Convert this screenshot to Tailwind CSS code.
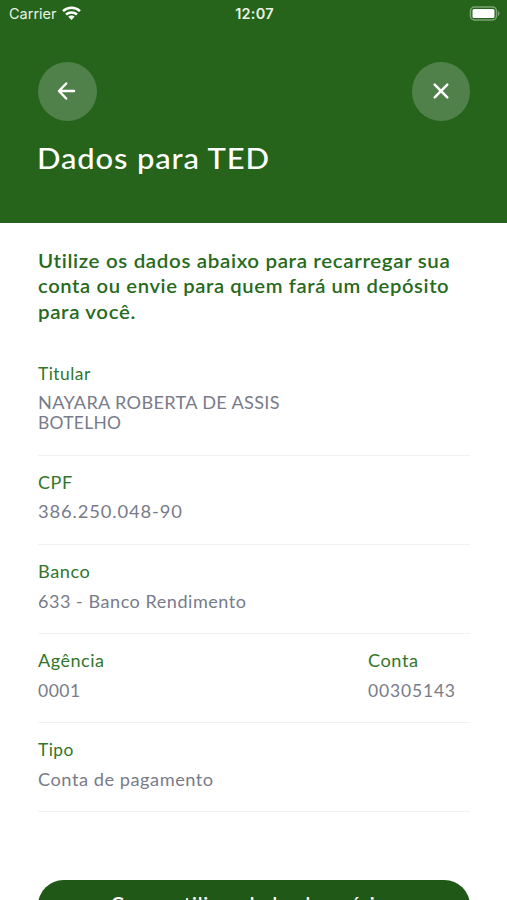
<!DOCTYPE html>
<html lang="pt-BR">
<head>
<meta charset="utf-8">
<meta name="viewport" content="width=device-width, initial-scale=1">
<title>Dados para TED</title>
<script src="https://cdn.jsdelivr.net/npm/@tailwindcss/browser@4"></script>
</head>
<body class="h-[900px] overflow-hidden bg-white font-['Lato',sans-serif]">
<div class="flex h-[900px] w-[507px] flex-col overflow-hidden">
  <header class="h-[223px] shrink-0 bg-[#25641a] text-white">
    <div class="grid h-[28px] grid-cols-3 items-center pl-[9px] pr-[7px] font-['Inter',sans-serif] text-[#e9f3e6]">
      <div class="flex items-center gap-[5px]">
        <span class="text-[14.5px] leading-[28px]">Carrier</span>
        <svg class="mb-[2px] h-[14px] w-[19px]" viewBox="0 0 19 14" fill="none" stroke="#fff" stroke-width="2.5"><path d="M1 5.1C5.8.7 13.2.7 18 5.1M4 8.5c3.1-2.8 7.900-2.800 11 0"/><path d="M9.500 14 6.300 10.800c1.700-1.700 4.700-1.700 6.400 0z" fill="#fff" stroke="none"/></svg>
      </div>
      <span class="text-center text-[14.5px] font-semibold leading-[28px] tracking-[0.200px]">12:07</span>
      <svg class="mb-[2px] h-[15px] w-[31px] justify-self-end" viewBox="0 0 31 15"><rect x="1.500" y="1" width="26" height="13" rx="4" fill="none" stroke="#7da476" stroke-width="1.500"/><rect x="3.500" y="3" width="22" height="9" rx="1.500" fill="#fff"/><path d="M29 5c2 1 2 4 0 5z" fill="#7da476"/></svg>
    </div>
    <div class="mt-[34px] flex justify-between pl-[38px] pr-[37px]">
      <button aria-label="Voltar" class="flex size-[58.500px] items-center justify-center rounded-full bg-[#50814a]">
        <svg class="size-[20px]" viewBox="0 0 20 20" fill="none" stroke="#fff" stroke-width="2.500" stroke-linecap="round" stroke-linejoin="round"><path d="M17 10H2.500M9.200 2.500 2 10l7.200 7.500"/></svg>
      </button>
      <button aria-label="Fechar" class="flex size-[58.500px] items-center justify-center rounded-full bg-[#50814a]">
        <svg class="size-[18px]" viewBox="0 0 18 18" fill="none" stroke="#fff" stroke-width="2.500" stroke-linecap="round"><path d="m2.700 2.700 12.600 12.600m0-12.600-12.600 12.600"/></svg>
      </button>
    </div>
    <h1 class="mt-[17px] pl-[37px] text-[29px] font-medium leading-[40px] tracking-[0.800px]"><span class="inline-block origin-left scale-x-[1.067]">Dados para TED</span></h1>
  </header>
  <main class="px-[37.500px] pt-[24.500px]">
    <p class="flex h-[78px] flex-col items-start whitespace-nowrap text-[19.500px] font-semibold leading-[25.800px] tracking-[0.600px] text-[#276a1d]">
      <span class="origin-left scale-x-[1.054]">Utilize os dados abaixo para recarregar sua</span>
      <span class="origin-left scale-x-[1.036]">conta ou envie para quem fará um depósito</span>
      <span class="origin-left scale-x-[1.050]">para você.</span>
    </p>
    <dl class="mt-[28px] text-[17px] leading-[20px] tracking-[0.500px] text-[#787b89]">
      <div class="h-[102px] border-b border-[#eff0f2] pt-[10px]">
        <dt class="text-[#32752a]"><span class="inline-block origin-left scale-x-[1.020]">Titular</span></dt>
        <dd class="mt-[9px] flex flex-col items-start leading-[20px] tracking-[0.300px]"><span class="origin-left scale-x-[1.066]">NAYARA ROBERTA DE ASSIS</span><span class="origin-left scale-x-[1.025]">BOTELHO</span></dd>
      </div>
      <div class="h-[89px] border-b border-[#eff0f2] pt-[17px]">
        <dt class="text-[#32752a]"><span class="inline-block origin-left scale-x-[1.060]">CPF</span></dt>
        <dd class="mt-[9px] tracking-[0.800px]"><span class="inline-block origin-left scale-x-[1.080]">386.250.048-90</span></dd>
      </div>
      <div class="h-[89px] border-b border-[#eff0f2] pt-[17px]">
        <dt class="text-[#32752a]"><span class="inline-block origin-left scale-x-[1.070]">Banco</span></dt>
        <dd class="mt-[10px]"><span class="inline-block origin-left scale-x-[1.061]">633 - Banco Rendimento</span></dd>
      </div>
      <div class="flex h-[89px] justify-between border-b border-[#eff0f2] pt-[17px]">
        <div>
          <dt class="text-[#32752a]"><span class="inline-block origin-left scale-x-[1.060]">Agência</span></dt>
          <dd class="mt-[10px]"><span class="inline-block origin-left scale-x-[1.030]">0001</span></dd>
        </div>
        <div class="w-[102px]">
          <dt class="text-[#32752a]"><span class="inline-block origin-left scale-x-[1.070]">Conta</span></dt>
          <dd class="mt-[10px] tracking-[0.800px]"><span class="inline-block origin-left scale-x-[1.030]">00305143</span></dd>
        </div>
      </div>
      <div class="h-[89px] border-b border-[#eff0f2] pt-[17px]">
        <dt class="text-[#32752a]"><span class="inline-block origin-left scale-x-[1.020]">Tipo</span></dt>
        <dd class="mt-[10px]"><span class="inline-block origin-left scale-x-[1.070]">Conta de pagamento</span></dd>
      </div>
    </dl>
    <button class="mt-[68px] flex h-[51px] w-full items-center justify-center rounded-[26px] bg-[#205818] text-[18.500px] font-semibold tracking-[0.800px] text-white"><span class="inline-block scale-x-[1.070]">Como utilizar dados bancários</span></button>
  </main>
</div>
</body>
</html>
